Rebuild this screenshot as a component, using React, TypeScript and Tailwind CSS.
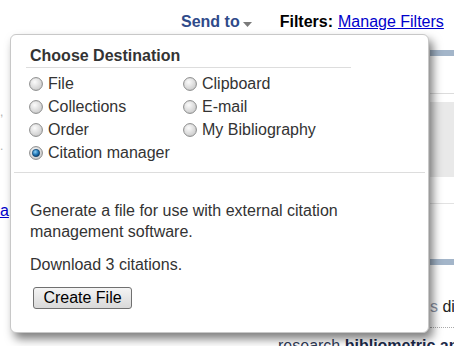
import React from 'react'

type RadioProps = { checked?: boolean }

function Radio({ checked }: RadioProps): React.JSX.Element {
    return (
        <svg width="14" height="14" viewBox="0 0 14 14" className="shrink-0">
            <defs>
                <radialGradient id={checked ? 'rgOn' : 'rgOff'} cx="40%" cy="35%" r="70%">
                    <stop offset="0%" stopColor="#fbfbfb" />
                    <stop offset="100%" stopColor="#c9c9c9" />
                </radialGradient>
                <radialGradient id="dot" cx="40%" cy="35%" r="65%">
                    <stop offset="0%" stopColor="#8fd0f5" />
                    <stop offset="60%" stopColor="#2077b6" />
                    <stop offset="100%" stopColor="#0b3f6e" />
                </radialGradient>
            </defs>
            <circle cx="7" cy="7" r="6.4" fill={checked ? 'url(#rgOn)' : 'url(#rgOff)'} stroke="#8a8b8b" strokeWidth="1" />
            {checked && <circle cx="7" cy="7" r="3.7" fill="url(#dot)" stroke="#0d3a63" strokeWidth="0.6" />}
        </svg>
    )
}

function Option({ label, checked }: { label: string; checked?: boolean }): React.JSX.Element {
    return (
        <label className="flex items-center h-[23px] leading-[23px] gap-[5px]">
            <Radio checked={checked} />
            <span>{label}</span>
        </label>
    )
}

export default function App(): React.JSX.Element {
    return (
        <div className="relative w-[454px] h-[346px] overflow-hidden bg-white font-['Liberation_Sans',Arial,sans-serif] text-[16px] text-[#333]">
            {/* page behind the menu */}
            <div className="flex items-center pl-[181px] pt-[13px] leading-[18px]">
                <span className="font-bold text-[#2f4a8a]">Send to</span>
                <svg width="10" height="6" viewBox="0 0 10 6" className="ml-[3px] mt-[5px]">
                    <path d="M0 0 L9 0 L4.5 5 Z" fill="#7a7a7a" />
                </svg>
                <span className="ml-[27px] font-bold text-black">Filters:</span>
                <a className="ml-[5px] text-[#0000cc] underline">Manage Filters</a>
            </div>

            <div className="flex justify-between mt-[5px]">
                <div className="w-[10px] flex flex-col leading-[18px]">
                    <div className="mt-[70px] text-[#b0b0b0] text-[12px] leading-[12px]">,</div>
                    <div className="mt-[22px] text-[#b0b0b0] text-[12px] leading-[12px]">.</div>
                    <div className="mt-[50px] text-[#0000cc] underline">a</div>
                </div>
                <div className="w-[24px] flex flex-col">
                    <div className="h-[6px] mt-[14px] bg-[#a3b5c9]" />
                    <div className="h-[1px] mt-[37px] bg-[#dcdcdc]" />
                    <div className="h-[75px] mt-[8px] bg-[#e9e9e9]" />
                    <div className="h-[1px] mt-[26px] bg-[#e2e2e2]" />
                    <div className="h-[6px] mt-[55px] bg-[#a3b5c9]" />
                    <div className="mt-[33px] leading-[18px] text-[#222] whitespace-nowrap">
                        <span className="text-[#8a94a6]">s</span> di
                    </div>
                    <div className="mt-[11px] border-t border-dotted border-[#aaa]" />
                </div>
            </div>
            <div className="absolute left-[278px] top-[337px] whitespace-nowrap leading-[18px] text-[#2f3a55]">
                research <b className="text-[#1c2a4a]">bibliometric an</b>
            </div>

            {/* Send to menu */}
            <div className="absolute left-[10px] top-[34px] w-[419px] h-[299px] bg-white border border-[#c8c8c8] rounded-[6px] shadow-[4px_6px_10px_rgba(0,0,0,0.5)]">
                <div className="ml-[15px] w-[325px] mt-[12px] pb-[2px] pl-[4px] leading-[18px] font-bold border-b border-[#dddddd]">
                    Choose Destination
                </div>
                <div className="grid grid-cols-[154px_154px] ml-[18px] mt-[4px]">
                    <Option label="File" />
                    <Option label="Clipboard" />
                    <Option label="Collections" />
                    <Option label="E-mail" />
                    <Option label="Order" />
                    <Option label="My Bibliography" />
                    <Option label="Citation manager" checked />
                </div>
                <div className="mx-[3px] mt-[8px] border-t border-[#dddddd]" />
                <div className="pl-[19px] pt-[27px] leading-[21px]">
                    <p>Generate a file for use with external citation<br />management software.</p>
                    <p className="mt-[12px]">Download 3 citations.</p>
                    <button className="mt-[12px] ml-[3px] h-[22px] w-[99px] leading-[20px] text-black border border-[#707070] rounded-[3px] bg-gradient-to-b from-[#f4f4f4] to-[#d9d9d9]">
                        Create File
                    </button>
                </div>
            </div>
        </div>
    )
}
